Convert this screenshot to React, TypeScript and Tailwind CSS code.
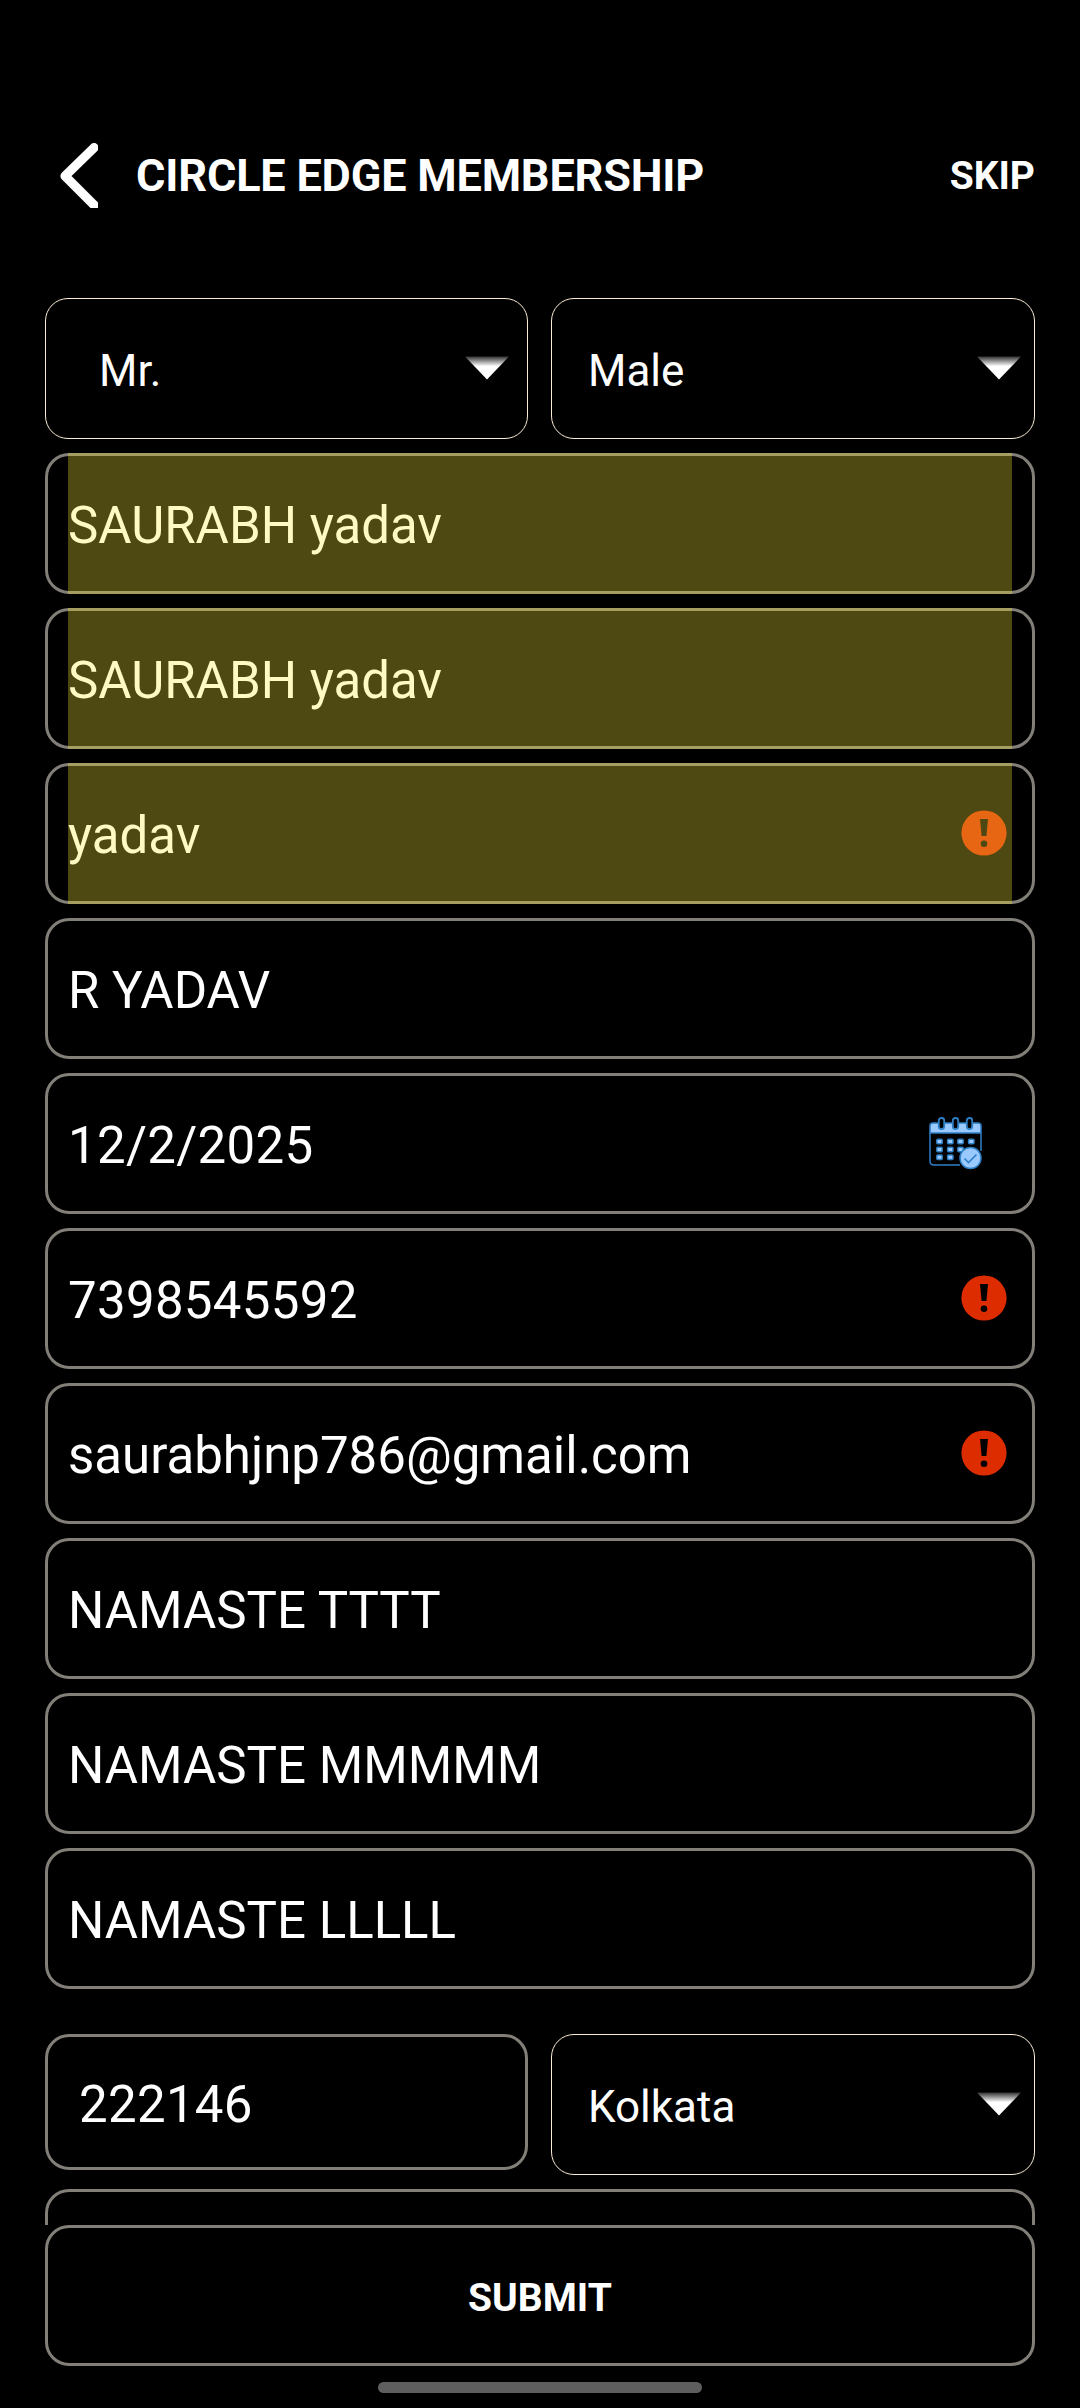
import { useState } from 'react';
import type { ReactNode } from 'react';

const fields = [
  { id: 'fullName', value: 'SAURABH yadav', autofilled: true },
  { id: 'firstName', value: 'SAURABH yadav', autofilled: true },
  { id: 'lastName', value: 'yadav', autofilled: true, icon: 'alert' },
  { id: 'guardian', value: 'R YADAV' },
  { id: 'date', value: '12/2/2025', icon: 'calendar', numeric: true },
  { id: 'phone', value: '7398545592', icon: 'alert', numeric: true },
  { id: 'email', value: 'saurabhjnp786@gmail.com', icon: 'alert' },
  { id: 'address1', value: 'NAMASTE TTTT' },
  { id: 'address2', value: 'NAMASTE MMMMM' },
  { id: 'address3', value: 'NAMASTE LLLLL' },
];

function BackIcon() {
  return (
    <svg width="38" height="65" viewBox="0 0 38 65" fill="none" aria-hidden>
      <path d="M34 4.7 L5 33 L35 63" stroke="#fff" strokeWidth="9.2" strokeLinecap="round" strokeLinejoin="round" />
    </svg>
  );
}

function CaretIcon() {
  return (
    <svg width="44" height="24" viewBox="0 0 44 24" aria-hidden>
      <defs>
        <linearGradient id="caret" x1="0" y1="0" x2="0" y2="1">
          <stop offset="0" stopColor="#fff" stopOpacity="0.2" />
          <stop offset="0.42" stopColor="#fff" />
        </linearGradient>
      </defs>
      <path d="M0 0.5 H44 L22 23.5 Z" fill="url(#caret)" />
    </svg>
  );
}

function AlertIcon({ autofilled }: { autofilled?: boolean }) {
  return (
    <svg width="46" height="46" viewBox="0 0 46 46" aria-hidden>
      <circle cx="23" cy="23" r="22.6" className={autofilled ? 'fill-[#e66613]' : 'fill-[#dd2c00]'} />
      <g className={autofilled ? 'fill-[#4e4812]' : 'fill-black'}>
        <path d="M19 9 H27 L25.4 26 H20.6 Z" />
        <circle cx="23" cy="33.7" r="3.3" />
      </g>
    </svg>
  );
}

function CalendarIcon() {
  const dots = [
    [10.5, 24.5], [21.3, 24.5], [31.5, 24.5], [42.3, 24.5],
    [10.5, 32.5], [21.3, 32.5], [31.5, 32.5],
    [10.5, 40.3], [21.3, 40.3],
  ];
  return (
    <svg width="54" height="53" viewBox="0 0 54 53" fill="none" stroke="#2f7fc4" strokeWidth="1.5" aria-hidden>
      <path d="M1 16 V9 Q1 6 4 6 H49 Q52 6 52 9 V16 Z" fill="#99c9ff" />
      <path d="M1 16 V44 Q1 48 5 48 H31 M52 16 V34" />
      {[12.5, 26.5, 40.5].map((x) => (
        <rect key={x} x={x - 2.7} y="1" width="5.4" height="11" rx="2.5" fill="#000" strokeWidth="1.8" />
      ))}
      {dots.map(([x, y]) => (
        <rect key={`${x}-${y}`} x={x - 2.7} y={y - 2.2} width="5.4" height="4.4" rx="1" fill="#99c9ff" />
      ))}
      <circle cx="41.5" cy="41" r="10.5" fill="#99c9ff" />
      <path d="M35.5 41.5 L39.5 45.5 L47.5 37.5" strokeWidth="1.6" />
    </svg>
  );
}

function SelectBox({ value, className }: { value: string; className: string }) {
  return (
    <button type="button" className={`flex h-[141px] items-start justify-between rounded-[23px] border border-[#faebd7] ${className}`}>
      <span className="mt-[45px] text-[44px] leading-[54px]">{value}</span>
      <span className="mt-[57px]">
        <CaretIcon />
      </span>
    </button>
  );
}

function FieldBox({ autofilled, children }: { autofilled?: boolean; children?: ReactNode }) {
  return (
    <div className="relative h-[141px] shrink-0 rounded-[24px] border-[3px] border-[#827e78] px-5">
      {children}
      {autofilled && (
        <div className="pointer-events-none absolute -top-[3px] left-5 h-[141px] w-[944px] border-y-[3px] border-[#a69d60]" />
      )}
    </div>
  );
}

export default function App() {
  const [values, setValues] = useState<Record<string, string>>(
    Object.fromEntries(fields.map((f) => [f.id, f.value])),
  );
  const [pin, setPin] = useState('222146');

  return (
    <div className="flex h-[2408px] w-[1080px] flex-col overflow-hidden bg-black font-['Roboto',sans-serif] text-white">
      {/* Header */}
      <header className="flex h-[298px] shrink-0 items-start pl-[60px] pr-[45px]">
        <button type="button" aria-label="Back" className="mt-[143px]">
          <BackIcon />
        </button>
        <h1 className="ml-[38px] mt-[149px] text-[45px] font-bold leading-[54px] tracking-[-0.18px] whitespace-nowrap">
          CIRCLE EDGE MEMBERSHIP
        </h1>
        <button type="button" className="ml-auto mt-[152px] text-[39px] font-bold leading-[48px]">
          SKIP
        </button>
      </header>

      {/* Scrolling form, cut off by the submit bar */}
      <main className="flex h-[1927px] shrink-0 flex-col gap-[14px] overflow-hidden px-[45px]">
        <div className="flex gap-[23px]">
          <SelectBox value="Mr." className="w-[483px] pl-[53px] pr-[18px]" />
          <SelectBox value="Male" className="w-[484px] pl-[36px] pr-[13px]" />
        </div>

        {fields.map((f) => (
          <FieldBox key={f.id} autofilled={f.autofilled}>
            <div className={`-mt-[3px] flex h-[141px] items-start ${f.autofilled ? 'bg-[#4e4812]' : ''}`}>
              <input
                value={values[f.id]}
                onChange={(e) => setValues({ ...values, [f.id]: e.target.value })}
                className={`mt-[42px] h-[62px] min-w-0 flex-1 bg-transparent text-[51px] leading-[62px] outline-none ${
                  f.autofilled ? 'text-[#fff9c4]' : 'text-white'
                } ${f.numeric ? 'tracking-[0.3px]' : ''}`}
              />
              {f.icon === 'alert' && (
                <span className="mr-[5px] mt-[47px]">
                  <AlertIcon autofilled={f.autofilled} />
                </span>
              )}
              {f.icon === 'calendar' && (
                <span className="mr-[29px] mt-[44px]">
                  <CalendarIcon />
                </span>
              )}
            </div>
          </FieldBox>
        ))}

        <div className="mt-[31px] flex items-start gap-[23px]">
          <div className="h-[136px] w-[483px] rounded-[24px] border-[3px] border-[#827e78] pl-[31px]">
            <input
              value={pin}
              onChange={(e) => setPin(e.target.value)}
              className="mt-[37px] h-[62px] w-full bg-transparent text-[51px] leading-[62px] tracking-[0.3px] outline-none"
            />
          </div>
          <SelectBox value="Kolkata" className="w-[484px] pl-[36px] pr-[13px]" />
        </div>

        <FieldBox />
      </main>

      <div className="px-[45px]">
        <button
          type="button"
          className="flex h-[141px] w-full items-center justify-center rounded-[24px] border-[3px] border-[#827e78] pt-[5px] text-[39px] font-bold leading-[48px]"
        >
          SUBMIT
        </button>
      </div>

      {/* Gesture bar */}
      <div className="mx-auto mt-4 h-[11px] w-[324px] rounded-full bg-[#5e5e5e]" />
    </div>
  );
}
